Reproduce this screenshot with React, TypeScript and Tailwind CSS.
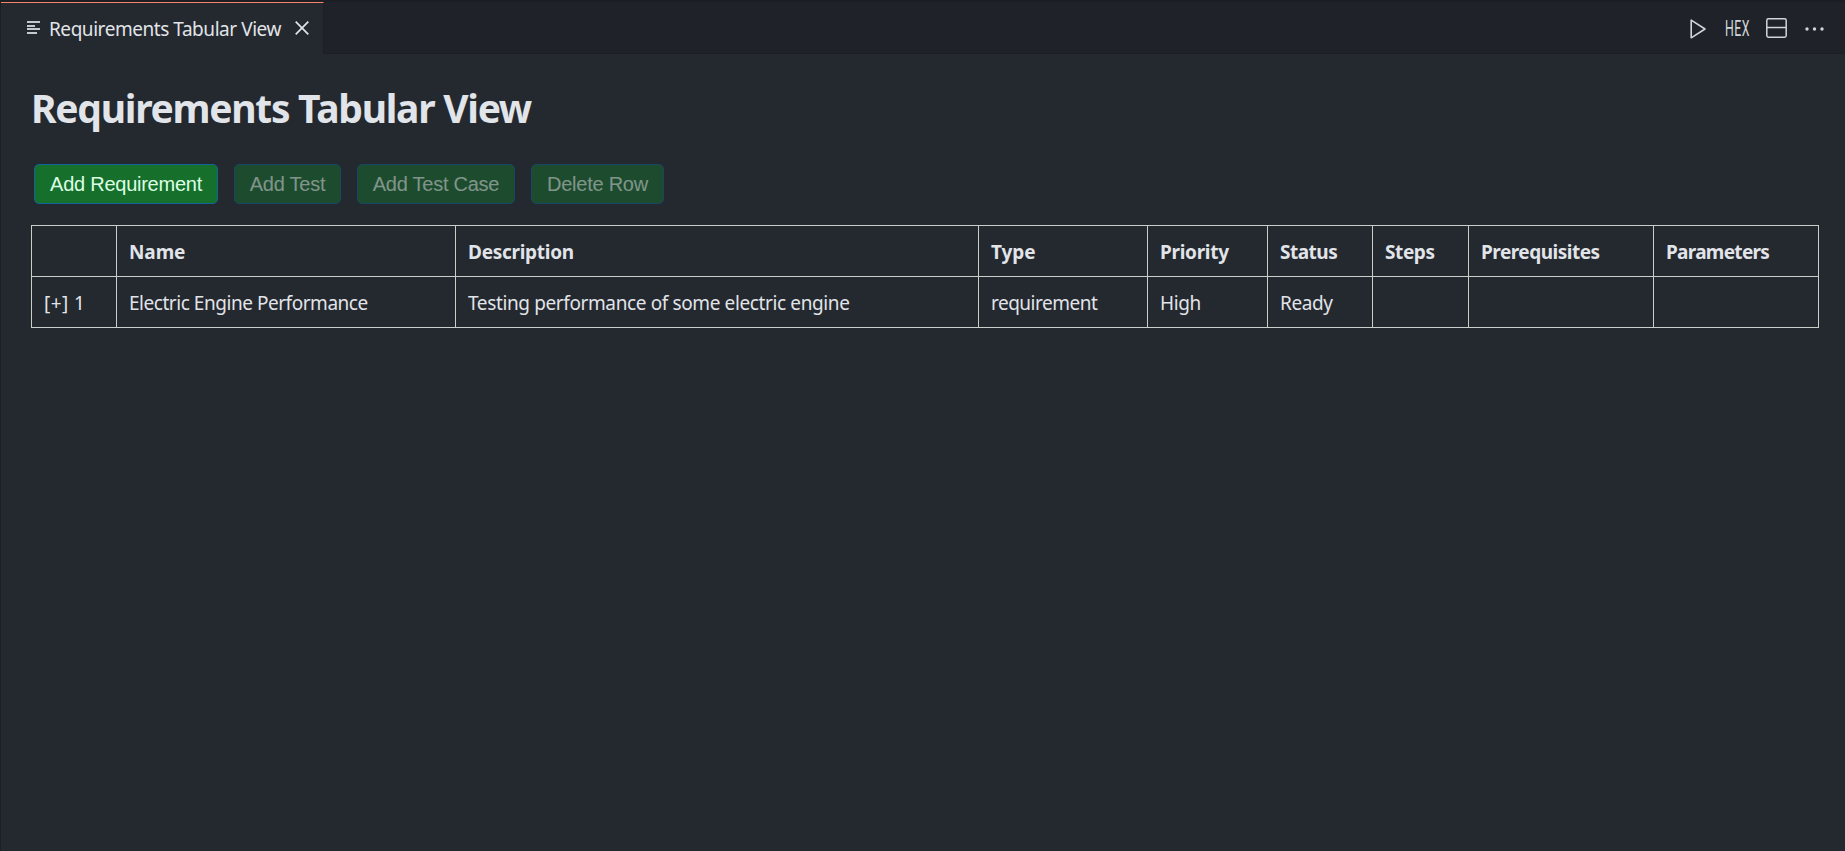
const columns = [
  { title: "", cell: "[+] 1", width: "w-[85px]", tracking: "", cellTracking: "tracking-[0.4px]" },
  { title: "Name", cell: "Electric Engine Performance", width: "w-[339px]", tracking: "tracking-[-0.1px]", cellTracking: "tracking-[-0.46px]" },
  { title: "Description", cell: "Testing performance of some electric engine", width: "w-[523px]", tracking: "tracking-[-0.28px]", cellTracking: "tracking-[-0.38px]" },
  { title: "Type", cell: "requirement", width: "w-[169px]", tracking: "tracking-[-0.1px]", cellTracking: "tracking-[-0.5px]" },
  { title: "Priority", cell: "High", width: "w-[120px]", tracking: "tracking-[-0.3px]", cellTracking: "tracking-[-0.38px]" },
  { title: "Status", cell: "Ready", width: "w-[105px]", tracking: "tracking-[-0.5px]", cellTracking: "tracking-[-0.38px]" },
  { title: "Steps", cell: "", width: "w-[96px]", tracking: "tracking-[-0.4px]", cellTracking: "" },
  { title: "Prerequisites", cell: "", width: "w-[185px]", tracking: "tracking-[-0.5px]", cellTracking: "" },
  { title: "Parameters", cell: "", width: "w-[165px]", tracking: "tracking-[-0.7px]", cellTracking: "" },
];

const actions = [
  { label: "Add Requirement", width: "w-[184px]", enabled: true },
  { label: "Add Test", width: "w-[107px]", enabled: false },
  { label: "Add Test Case", width: "w-[158px]", enabled: false },
  { label: "Delete Row", width: "w-[133px]", enabled: false },
];

function ListIcon() {
  return (
    <svg width="14" height="14" viewBox="0 0 14 14" fill="#c5c9cf" shapeRendering="crispEdges">
      <path d="M0 0h13v2H0zM0 4h8v2H0zM0 7h13v2H0zM0 11h10v2H0z" />
    </svg>
  );
}

function CloseIcon() {
  return (
    <svg className="mb-px" width="14" height="14" viewBox="0 0 14 14" fill="none" stroke="#e1e4e8" strokeWidth="1.7">
      <path d="M0.7 0.7l12.6 12.6M13.3 0.7L0.7 13.3" />
    </svg>
  );
}

function TabBar() {
  return (
    <header className="flex h-[54px] border-t-2 border-[#1b1f23] bg-[#1f2329]">
      <div className="flex h-[52px] w-[323px] shrink-0 items-center border-t border-r border-t-[#f9826c] border-r-[#1b1f23] bg-[#24282f] pl-[26px]">
        <div className="mb-[2px] h-[14px] w-[22px] shrink-0">
          <ListIcon />
        </div>
        <span className="w-[246px] whitespace-nowrap text-[19px] leading-[26px] tracking-[-0.45px] text-[#e1e4e8]">
          Requirements Tabular View
        </span>
        <CloseIcon />
      </div>
      <div className="flex grow items-center justify-end border-b border-[#1b1f23] pt-[2px] pr-[21px]">
        <svg className="mr-[19px]" width="17" height="20" viewBox="0 0 17 20" fill="none" stroke="#d1d5da" strokeWidth="1.6" strokeLinejoin="round">
          <path d="M2.2 1.2v17.6L16 10z" />
        </svg>
        <div className="mr-[17px] flex h-6 w-6 items-center justify-center">
          <span className="block scale-x-[0.56] font-['Roboto',sans-serif] text-[22px] leading-6 tracking-[1px] text-[#d1d5da]">HEX</span>
        </div>
        <svg className="mr-[18px] mb-[2px]" width="21" height="20" viewBox="0 0 21 20" fill="none" stroke="#d1d5da" strokeWidth="1.5">
          <rect x="0.8" y="0.8" width="19.4" height="18.4" rx="1.6" />
          <path d="M1 9.5h19" />
        </svg>
        <svg width="19" height="4" viewBox="0 0 19 4" fill="#d1d5da">
          <circle cx="2" cy="2" r="1.7" />
          <circle cx="9.5" cy="2" r="1.7" />
          <circle cx="17" cy="2" r="1.7" />
        </svg>
      </div>
    </header>
  );
}

export default function App() {
  return (
    <div className="h-[851px] w-[1845px] overflow-hidden border-l border-[#1b1f23] bg-[#24282f] font-['Noto_Sans',sans-serif] text-[#e1e4e8]">
      <TabBar />
      <main className="pl-[30px] pr-[26px] pt-[27px]">
        <h1 className="text-[39px] font-bold leading-[54px] tracking-[-1.28px]">Requirements Tabular View</h1>
        <div className="mt-[29px] flex gap-4 pl-[3px]">
          {actions.map((action) => (
            <button
              key={action.label}
              disabled={!action.enabled}
              className={`${action.width} h-10 whitespace-nowrap rounded-[5px] border border-[#0f6499] bg-[#176f2c] font-['Liberation_Sans',sans-serif] text-[20px] tracking-[-0.25px] text-[#dcffe4] disabled:opacity-50`}
            >
              {action.label}
            </button>
          ))}
        </div>
        <table className="mt-[21px] w-[1788px] table-fixed border-collapse text-left text-[19px] leading-[26px]">
          <thead>
            <tr className="h-[51px]">
              {columns.map((column) => (
                <th key={column.title} className={`${column.width} ${column.tracking} border border-[#c9cec8] px-3 pt-[1px] font-bold`}>
                  {column.title}
                </th>
              ))}
            </tr>
          </thead>
          <tbody>
            <tr className="h-[51px]">
              {columns.map((column) => (
                <td key={column.title} className={`${column.cellTracking} border border-[#c9cec8] px-3 pt-[1px]`}>
                  {column.cell}
                </td>
              ))}
            </tr>
          </tbody>
        </table>
      </main>
    </div>
  );
}
